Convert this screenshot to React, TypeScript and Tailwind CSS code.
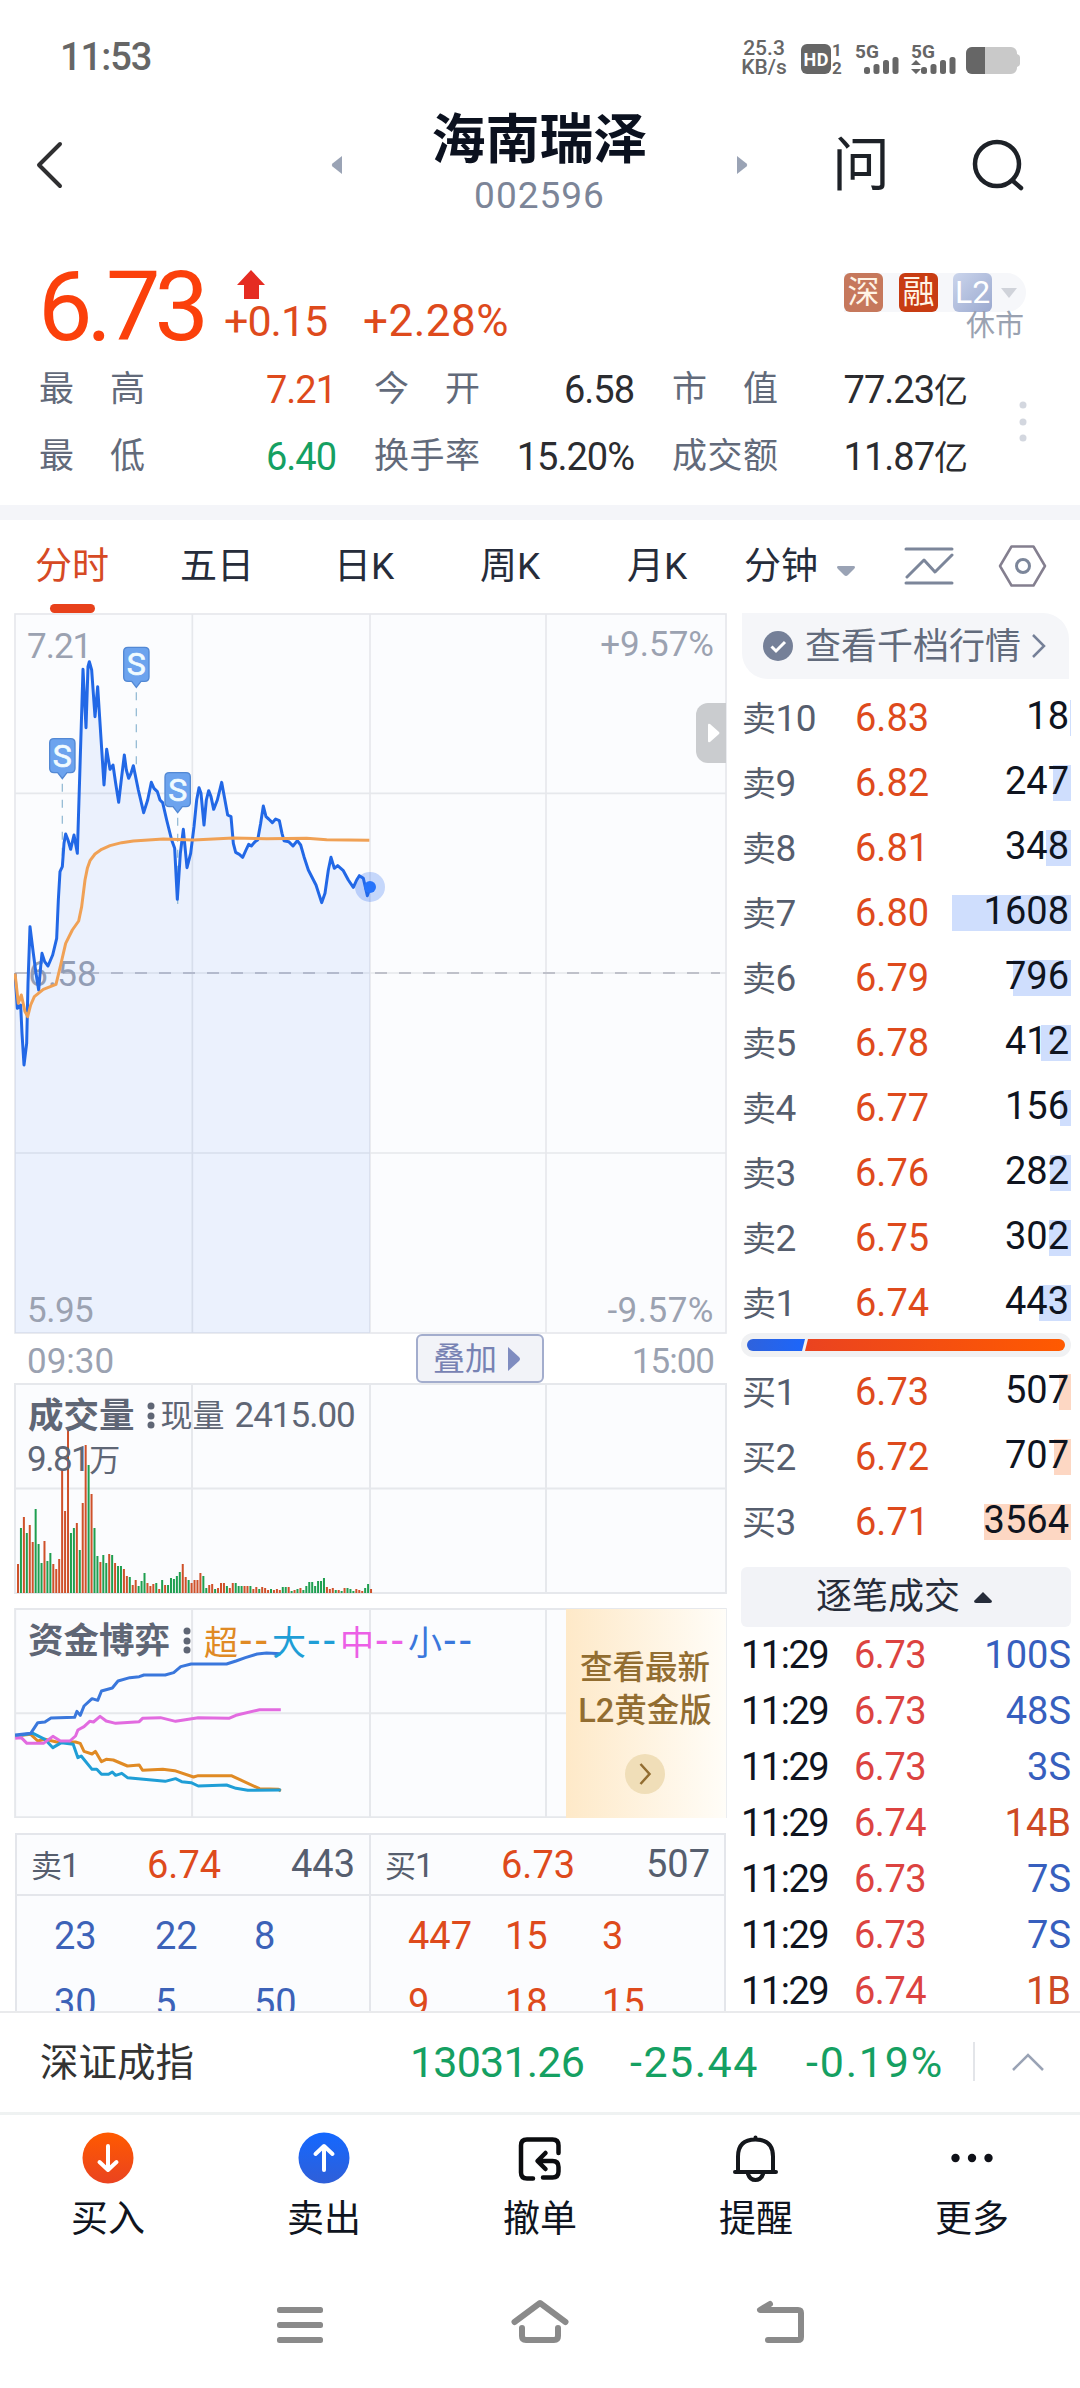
const tabs = [
  { label: '分时', pos: 'ml-[35px] w-[76px]' },
  { label: '五日', pos: 'ml-[69px] w-[76px]' },
  { label: '日K', pos: 'ml-[78px] w-[66px]' },
  { label: '周K', pos: 'ml-[80px] w-[66px]' },
  { label: '月K', pos: 'ml-[81px] w-[66px]' },
];

const stats = [
  { label: '最高', value: '7.21', color: 'text-[#de4a1c]' },
  { label: '今开', value: '6.58', color: 'text-[#2b2c30]' },
  { label: '市值', value: '77.23亿', color: 'text-[#2b2c30]' },
  { label: '最低', value: '6.40', color: 'text-[#15a062]' },
  { label: '换手率', value: '15.20%', color: 'text-[#2b2c30]' },
  { label: '成交额', value: '11.87亿', color: 'text-[#2b2c30]' },
];

const asks = [
  { label: '卖10', price: '6.83', volume: 18, bar: 1 },
  { label: '卖9', price: '6.82', volume: 247, bar: 18 },
  { label: '卖8', price: '6.81', volume: 348, bar: 25 },
  { label: '卖7', price: '6.80', volume: 1608, bar: 119 },
  { label: '卖6', price: '6.79', volume: 796, bar: 58 },
  { label: '卖5', price: '6.78', volume: 412, bar: 30 },
  { label: '卖4', price: '6.77', volume: 156, bar: 11 },
  { label: '卖3', price: '6.76', volume: 282, bar: 21 },
  { label: '卖2', price: '6.75', volume: 302, bar: 22 },
  { label: '卖1', price: '6.74', volume: 443, bar: 32 },
];

const bids = [
  { label: '买1', price: '6.73', volume: 507, bar: 12 },
  { label: '买2', price: '6.72', volume: 707, bar: 17 },
  { label: '买3', price: '6.71', volume: 3564, bar: 87 },
];

const trades = [
  { price: '6.73', volume: '100S' },
  { price: '6.73', volume: '48S' },
  { price: '6.73', volume: '3S' },
  { price: '6.74', volume: '14B' },
  { price: '6.73', volume: '7S' },
  { price: '6.73', volume: '7S' },
  { price: '6.74', volume: '1B' },
];

// height of each minute bar, followed by r (up) or g (down)
const volumeBars =
  '29r 65g 76r 60g 68r 51r 84g 49g 30g 52r 32g 40g 29r 24r 34r 124r 82r 163r 60g 65g 70r 43g 90r 148r 128g 99r 65g 37g 31r 38g 30g 39r 38g 30r 27g 27g 24r 17r 16g 8r 13r 7g 12g 20g 10r 7r 9r 10g 4r 13g 8r 8g 15g 14g 17g 21g 29r 16r 13g 10r 13r 13r 20r 17g 5g 8r 9r 4g 5r 10r 10r 7g 5r 10r 10g 7g 7g 7r 7r 7g 4r 6r 4g 6r 5r 3r 4g 3r 4r 3r 6g 6g 6r 2g 3r 4g 5r 3g 7g 11g 11g 7g 12g 12g 15g 6r 4r 5r 3g 3r 2g 5r 5g 4g 2g 4r 3r 2r 5g 9g 4r'.split(' ');

const pricePoints =
  '45,1120 52,1225 62,1215 66,1300 72,1395 80,1330 84,1150 90,980 100,1060 108,1120 116,1170 122,1100 126,1060 134,1085 144,1098 158,1065 170,1015 175,900 180,815 187,800 192,730 197,702 204,720 212,748 222,705 232,760 240,500 249,208 258,383 264,200 268,185 275,210 285,350 293,260 302,400 312,555 320,448 330,508 339,495 347,550 356,607 365,530 373,465 379,510 386,535 393,520 400,497 415,570 431,638 443,600 454,547 462,565 472,575 480,600 488,608 500,660 515,720 524,745 532,898 541,760 550,688 561,803 572,760 582,680 590,600 597,563 603,580 612,675 619,600 626,572 633,590 641,628 652,600 665,547 673,590 683,645 693,650 700,730 707,757 718,763 728,772 738,750 746,733 754,738 765,725 773,720 782,670 790,618 798,650 806,657 817,668 827,657 838,662 846,700 852,722 866,725 879,738 892,722 902,735 912,770 925,810 948,855 965,908 975,880 985,810 993,772 1003,805 1013,797 1030,812 1045,840 1060,862 1070,840 1078,827 1090,835 1102,887 1110,865';

const averagePoints =
  '45,1120 55,1210 64,1185 75,1235 83,1250 92,1215 103,1190 130,1168 168,1153 182,1095 197,1030 217,990 236,963 245,920 255,840 262,805 270,782 285,762 305,748 330,737 365,728 400,723 490,717 580,720 700,714 800,716 920,715 980,719 1108,721';

const flowLines = [
  {
    color: '#e08a24',
    points: '32,440 65,435 80,455 95,450 120,458 160,458 170,462 178,486 195,494 202,486 215,517 225,510 240,512 270,530 295,527 302,543 345,540 370,544 410,563 420,559 490,559 550,598 590,600 595,605',
  },
  {
    color: '#1f9ed6',
    points: '32,440 70,432 95,450 112,475 130,460 155,465 165,505 172,500 195,540 205,540 215,555 230,555 238,548 245,558 258,552 270,565 350,576 372,568 385,577 405,580 420,590 480,587 500,597 525,603 595,602',
  },
  {
    color: '#e26be0',
    points: '32,447 45,445 57,462 92,462 112,441 128,455 148,455 160,440 165,422 178,412 190,396 198,398 212,381 225,395 245,402 295,397 302,387 340,385 372,396 420,385 485,387 500,378 550,361 595,361',
  },
  {
    color: '#3a77dc',
    points: '32,437 65,432 80,400 95,398 108,386 158,384 163,366 170,378 178,350 195,328 207,333 215,305 238,296 250,275 275,265 295,262 305,257 350,257 368,250 383,232 405,224 480,224 500,215 520,205 545,194 565,191 595,193',
  },
];

const markers = [
  { x: 187, y: 416, end: 800 },
  { x: 409, y: 142, end: 500 },
  { x: 533, y: 518, end: 912 },
];

function StatusBar() {
  return (
    <div className="flex h-[95px] pt-[37px] text-[#666]">
      <div className="ml-[60px] w-[676px] text-[38px] leading-[41px] font-medium tracking-[-1px]">11:53</div>
      <div className="w-[56px] pt-[2px] text-center text-[21px] leading-[19px] font-medium">
        <div>25.3</div>
        <div>KB/s</div>
      </div>
      <svg className="ml-[8px]" width="222" height="42" viewBox="800 37 222 42" fill="#666">
        <rect x="801" y="44" width="30" height="30" rx="6" />
        <text x="803.5" y="66" fontSize="18" fontWeight="700" fill="#fff" textLength="25">HD</text>
        <text x="832" y="56" fontSize="17" fontWeight="700">1</text>
        <text x="832" y="74" fontSize="17" fontWeight="700">2</text>
        <text x="855" y="58" fontSize="19" fontWeight="700">5G</text>
        <text x="911" y="58" fontSize="19" fontWeight="700">5G</text>
        <rect x="864" y="67" width="6" height="7" rx="2.5" />
        <rect x="873.5" y="64" width="6" height="10" rx="2.5" />
        <rect x="883" y="60" width="6" height="14" rx="2.5" />
        <rect x="892.5" y="57" width="6" height="17" rx="2.5" />
        <path d="M911 65l5-5 5 5zM911 69l5 5 5-5z" />
        <rect x="921" y="67" width="6" height="7" rx="2.5" />
        <rect x="930.5" y="64" width="6" height="10" rx="2.5" />
        <rect x="940" y="60" width="6" height="14" rx="2.5" />
        <rect x="949.5" y="57" width="6" height="17" rx="2.5" />
        <path d="M972 47h39a6 6 0 0 1 6 6v1q3 1 3 3v7q0 2-3 3v1a6 6 0 0 1-6 6h-39a6 6 0 0 1-6-6v-15a6 6 0 0 1 6-6z" fill="#c9c9c9" />
        <path d="M972 47h13v27h-13a6 6 0 0 1-6-6v-15a6 6 0 0 1 6-6z" />
      </svg>
    </div>
  );
}

function Header() {
  return (
    <div className="flex h-[140px] items-center">
      <svg className="ml-[35px]" width="30" height="50" viewBox="0 0 30 50" fill="none" stroke="#2f2f31" strokeWidth="4" strokeLinecap="round" strokeLinejoin="round">
        <path d="M25 4L4 25l21 21" />
      </svg>
      <svg className="ml-[266px]" width="12" height="20" viewBox="0 0 12 20" fill="#9aa3b5">
        <path d="M11 1v18L1.500 11.500q-1.500-1.500 0-3z" />
      </svg>
      <div className="flex h-full flex-1 flex-col items-center pt-[16px]">
        <h1 className="text-[54px] leading-[60px] font-bold text-[#0b111f]">海南瑞泽</h1>
        <div className="mt-[3px] text-[37px] leading-[44px] tracking-[1px] text-[#7c8598]">002596</div>
      </div>
      <svg width="12" height="20" viewBox="0 0 12 20" fill="#9aa3b5">
        <path d="M1 1v18l9.500-7.500q1.500-1.500 0-3z" />
      </svg>
      <div className="ml-[83px] w-[60px] text-center text-[58px] leading-[60px] text-[#1d2127]">问</div>
      <svg className="mr-[50px] ml-[79px]" width="60" height="54" viewBox="0 0 60 54" fill="none" stroke="#1d2127" strokeWidth="4.500" strokeLinecap="round">
        <circle cx="27" cy="26" r="22" />
        <path d="M43 43l8 7" />
      </svg>
    </div>
  );
}

function Quote() {
  return (
    <section className="h-[270px] pt-[30px]">
      <div className="flex h-[80px]">
        <div className="ml-[38px] w-[186px] text-[97px] leading-[84px] tracking-[-6px] text-[#fb400b]">6.73</div>
        <div className="w-[139px]">
          <svg className="mt-[5px] ml-[13px]" width="28" height="30" viewBox="0 0 28 30" fill="#e52c22">
            <path d="M14 0L28 15h-6v14H7V15H0z" />
          </svg>
          <div className="text-[43px] leading-[43px] tracking-[-1px] text-[#de4a1c]">+0.15</div>
        </div>
        <div className="w-[481px] pt-[35px] text-[44px] leading-[43px] tracking-[0.500px] text-[#de4a1c]">+2.28%</div>
        <div className="w-[182px] pt-[8px]">
          <div className="flex h-[39px] items-center rounded-r-full bg-[#f6f7fa] text-[32px] leading-[38px] text-[#fff4e6]">
            <span className="h-[39px] w-[39px] rounded-[6px] bg-[#c6785c] text-center">深</span>
            <span className="ml-[16px] h-[39px] w-[39px] rounded-[6px] bg-[#c83c12] text-center">融</span>
            <span className="ml-[15px] h-[39px] w-[39px] rounded-[6px] bg-linear-to-br from-[#cbd5ec] to-[#9ba9cf] text-center text-white">L2</span>
            <svg className="ml-[9px]" width="16" height="10" viewBox="0 0 16 10" fill="#d0d3da">
              <path d="M0 0h16L8 10z" />
            </svg>
          </div>
          <div className="pr-[2px] text-right text-[29px] leading-[29px] text-[#9aa2b1]">休市</div>
        </div>
      </div>
      <div className="mt-[12px] flex">
        <div className="ml-[39px] grid w-[928px] grid-cols-[297px_260px_295px] gap-x-[38px] text-[38px] leading-[66px]">
          {stats.map((stat) => (
            <div key={stat.label} className="flex">
              <span className="flex w-[106px] justify-between text-[35px] text-[#626a7a]">
                {stat.label.split('').map((char) => (
                  <span key={char}>{char}</span>
                ))}
              </span>
              <span className={`flex-1 text-right tracking-[-1px] ${stat.color}`}>
                {stat.value.replace('亿', '')}
                {stat.value.includes('亿') && <span className="text-[34px]">亿</span>}
              </span>
            </div>
          ))}
        </div>
        <svg className="mt-[43px] ml-[52px]" width="8" height="44" viewBox="0 0 8 44" fill="#d3d7df">
          <circle cx="4" cy="5" r="3.500" />
          <circle cx="4" cy="22" r="3.500" />
          <circle cx="4" cy="38" r="3.500" />
        </svg>
      </div>
    </section>
  );
}

function PeriodTabs() {
  return (
    <nav className="flex h-[93px] text-[37px] leading-[94px] text-[#262c3a]">
      {tabs.map((tab, i) => (
        <div key={tab.label} className={`relative shrink-0 ${tab.pos} ${i === 0 ? 'text-[#d64a24]' : ''}`}>
          {tab.label}
          {i === 0 && <div className="absolute bottom-0 left-[15px] h-[9px] w-[45px] rounded-full bg-[#e8411b]" />}
        </div>
      ))}
      <div className="ml-[51px] w-[77px]">分钟</div>
      <svg className="mt-[45px] ml-[15px]" width="20" height="12" viewBox="0 0 20 12" fill="#9aa3b5">
        <path d="M2 1h16q2 1 0 3l-6 6q-2 2-4 0L2 4q-2-2 0-3z" />
      </svg>
      <svg className="mt-[25px] ml-[48px]" width="50" height="42" viewBox="0 0 50 42" fill="none" stroke="#7c869a" strokeWidth="3" strokeLinecap="round" strokeLinejoin="round">
        <path d="M2 4h46M2 38h46M3 32l17-17 11 12 17-17" />
      </svg>
      <svg className="mt-[24px] ml-[44px]" width="50" height="44" viewBox="0 0 50 44" fill="none" stroke="#847f8f" strokeWidth="2.500" strokeLinejoin="round">
        <path d="M13.500 2.500h22L47 22 35.500 41.500h-22L2 22z" />
        <circle cx="25" cy="22" r="6.500" stroke="#7c869a" strokeWidth="3" />
      </svg>
    </nav>
  );
}

function PriceChart() {
  return (
    <div className="relative h-[721px] text-[35px] leading-[36px] text-[#9ba2b1]">
      <svg className="block" width="713" height="721" viewBox="42 39 2139 2163">
        <rect x="45" y="42" width="2133" height="2157" fill="#fbfcfe" stroke="#e6e8ec" strokeWidth="5" />
        <path d="M577 42V2199M1110 42V2199M1638 42V2199M45 580H2178M45 1119H2178M45 1659H2178" stroke="#e6e8ec" strokeWidth="5" />
        <path d="M45 1119H2160" stroke="#bfc1ca" strokeWidth="6" strokeDasharray="36 36" />
        <text x="85" y="1158" fontSize="105" fill="#9ba2b1">6.58</text>
        <polygon points={`${pricePoints} 1110,2199 45,2199`} fill="#2468f2" fillOpacity="0.075" />
        {markers.map((m) => (
          <path key={m.x} d={`M${m.x} ${m.y + 135}V${m.end}`} stroke="#98bdd6" strokeWidth="4" strokeDasharray="24 24" />
        ))}
        <polyline points={pricePoints} fill="none" stroke="#2268e6" strokeWidth="9" strokeLinejoin="round" />
        <polyline points={averagePoints} fill="none" stroke="#f0a155" strokeWidth="9" strokeLinejoin="round" />
        <circle cx="1110" cy="861" r="45" fill="#2468f2" fillOpacity="0.25" />
        <circle cx="1110" cy="861" r="18" fill="#2673fb" />
        {markers.map((m) => (
          <g key={m.x}>
            <path
              d={`M${m.x - 25} ${m.y}h50q13 0 13 13v76q0 13 -13 13h-11l-14 18l-14 -18h-11q-13 0 -13 -13v-76q0 -13 13 -13z`}
              fill="#6ca3ee"
              stroke="#5288d4"
              strokeWidth="4"
            />
            <text x={m.x} y={m.y + 84} fontSize="96" fill="#f1fbff" stroke="#f1fbff" strokeWidth="2" textAnchor="middle">S</text>
          </g>
        ))}
      </svg>
      <span className="absolute top-[16px] left-[13px] tracking-[-1px]">7.21</span>
      <span className="absolute top-[14px] right-[13px]">+9.57%</span>
      <span className="absolute bottom-[5px] left-[13px] tracking-[-0.500px]">5.95</span>
      <span className="absolute right-[13px] bottom-[5px] tracking-[0.500px]">-9.57%</span>
      <div className="absolute top-[90px] right-px flex h-[60px] w-[30px] items-center rounded-l-[12px] bg-[#cacccf] pl-[12px]">
        <svg width="12" height="20" viewBox="0 0 12 20" fill="#fff">
          <path d="M0 2q0-2 2-1l9 8q1 1 0 2l-9 8q-2 1-2-1z" />
        </svg>
      </div>
    </div>
  );
}

function VolumeChart() {
  return (
    <div className="relative h-[211px] text-[#5f6675]">
      <svg className="block" width="713" height="211" viewBox="14 1383.500 713 211">
        <rect x="15" y="1384.500" width="711" height="209" fill="#fbfcfe" stroke="#e6e8ec" strokeWidth="2" />
        <path d="M192 1384V1594M370 1384V1594M546 1384V1594M15 1489H726" stroke="#e6e8ec" strokeWidth="2" />
        {volumeBars.map((bar, i) => {
          const height = parseInt(bar);
          return (
            <rect key={i} x={17 + i * 2.942} y={1593.5 - height} width="2" height={height} fill={bar.endsWith('r') ? '#cf512a' : '#1f9f50'} />
          );
        })}
      </svg>
      <div className="absolute top-[14px] left-[14px] flex h-[38px] items-center text-[33px] leading-[38px] whitespace-pre">
        <span className="text-[35.500px] font-bold">成交量</span>
        <svg className="mr-[6px] ml-[12px]" width="8" height="28" viewBox="0 0 8 28" fill="#5f6675">
          <circle cx="4" cy="4" r="3.500" />
          <circle cx="4" cy="14" r="3.500" />
          <circle cx="4" cy="23" r="3.500" />
        </svg>
        <span className="text-[32px]">现量</span>
        <span className="ml-[10px] text-[35px] tracking-[-1px]">2415.00</span>
      </div>
      <div className="absolute top-[58px] left-[13px] text-[35px] leading-[38px] tracking-[-1.500px]">
        9.81<span className="text-[31px]">万</span>
      </div>
    </div>
  );
}

function FlowChart() {
  return (
    <div className="relative mt-[14px] h-[210px]">
      <svg className="block" width="713" height="210" viewBox="29.600 56 1511 630" preserveAspectRatio="none">
        <rect x="32" y="59" width="1506" height="625" fill="#fbfcfe" stroke="#e6e8ec" strokeWidth="2" vectorEffect="non-scaling-stroke" />
        <path d="M407 58V686M784 58V686M1157 58V686M32 372H1538" stroke="#e6e8ec" strokeWidth="2" vectorEffect="non-scaling-stroke" />
        {flowLines.map((line) => (
          <polyline key={line.color} points={line.points} fill="none" stroke={line.color} strokeWidth="3" strokeLinejoin="round" vectorEffect="non-scaling-stroke" />
        ))}
      </svg>
      <div className="absolute top-[13px] left-[14px] flex h-[40px] items-center text-[34px] leading-[40px] whitespace-nowrap">
        <span className="text-[35.500px] font-bold text-[#5f6675]">资金博弈</span>
        <svg className="mr-[13px] ml-[13px]" width="8" height="28" viewBox="0 0 8 28" fill="#5f6675">
          <circle cx="4" cy="4" r="3.500" />
          <circle cx="4" cy="14" r="3.500" />
          <circle cx="4" cy="23" r="3.500" />
        </svg>
        <span className="w-[68px] text-[#e08a24]">超<span className="ml-[2px] text-[42px] leading-none tracking-[4px]">--</span></span>
        <span className="w-[68px] text-[#1f9ed6]">大<span className="ml-[2px] text-[42px] leading-none tracking-[4px]">--</span></span>
        <span className="w-[68px] text-[#ec5fe6]">中<span className="ml-[2px] text-[42px] leading-none tracking-[4px]">--</span></span>
        <span className="w-[68px] text-[#3a77dc]">小<span className="ml-[2px] text-[42px] leading-none tracking-[4px]">--</span></span>
      </div>
      <div className="absolute top-px right-px flex h-[209px] w-[160px] flex-col items-center bg-linear-to-r from-[#fee9c8] to-[#fffdf8] pt-[38px] pr-[2px] text-[32.500px] leading-[43px] font-medium text-[#926d31]">
        <div>查看最新</div>
        <div>L2黄金版</div>
        <svg className="mt-[21px]" width="40" height="40" viewBox="0 0 40 40" fill="none">
          <circle cx="20" cy="20" r="20" fill="#f0deb8" />
          <path d="M15.500 10l9 10-9 10" stroke="#926d31" strokeWidth="2.500" />
        </svg>
      </div>
    </div>
  );
}

type QueueHalfProps = { label: string; price: string; volume: string; rows: string[][]; color: string; cols: string };

function QueueHalf({ label, price, volume, rows, color, cols }: QueueHalfProps) {
  return (
    <div>
      <div className="flex h-[61px] border-b-2 border-[#e4e6eb] text-[38px] leading-[58px] text-[#565e6e]">
        <span className="w-[130px] pl-[14px]">
          <span className="text-[31px]">{label[0]}</span>
          <span className="-ml-px text-[34px]">{label[1]}</span>
        </span>
        <span className="w-[90px] pt-px text-[#de4a1c]">{price}</span>
        <span className="flex-1 pr-[14px] text-right">{volume}</span>
      </div>
      {rows.map((row) => (
        <div key={row.join()} className={`grid h-[67px] pt-[7px] pl-[37px] text-[38px] leading-[67px] ${cols} ${color}`}>
          {row.map((n) => (
            <span key={n}>{n}</span>
          ))}
        </div>
      ))}
    </div>
  );
}

function OrderRow({ label, price, volume, bar, side }: { label: string; price: string; volume: number; bar: number; side: 'ask' | 'bid' }) {
  return (
    <div className="relative flex h-[65px] text-[38px] leading-[37px]">
      <div className={`absolute top-0 right-0 h-[36px] ${side === 'ask' ? 'bg-[#cfdefd]' : 'bg-[#fdd7c3]'}`} style={{ width: bar }} />
      <span className="w-[113px] text-[37px] tracking-[-0.500px] text-[#565e6e]"><span className="text-[34px]">{label[0]}</span>{label.slice(1)}</span>
      <span className="text-[#de4a1c]">{price}</span>
      <span className="relative flex-1 pr-[2px] text-right leading-[32px] text-[#0f1420]">{volume}</span>
    </div>
  );
}

function OrderBook() {
  return (
    <div className="ml-[14px] w-[330px]">
      <div className="ml-px flex h-[66px] w-[327px] items-center rounded-tr-[26px] rounded-bl-[26px] bg-[#f5f6f9] pl-[21px] text-[#626b7c]">
        <svg width="30" height="30" viewBox="0 0 30 30" fill="none">
          <circle cx="15" cy="15" r="15" fill="#758098" />
          <path d="M8.500 15.500l4.500 4.500 9-9" stroke="#fff" strokeWidth="3" />
        </svg>
        <span className="ml-[12px] pt-[2px] text-[36px]">查看千档行情</span>
        <svg className="ml-[10px]" width="16" height="26" viewBox="0 0 16 26" fill="none" stroke="#758098" strokeWidth="2.500">
          <path d="M2 2l11 11L2 24" />
        </svg>
      </div>
      <div className="mt-[21px] pl-px">
        {asks.map((row) => (
          <OrderRow key={row.label} {...row} side="ask" />
        ))}
      </div>
      <div className="-mt-[17px] flex h-[24px] items-center rounded-full bg-[#f0f1f3] px-[6px]">
        <svg width="318" height="12" viewBox="0 0 318 12">
          <defs>
            <linearGradient id="sell">
              <stop offset="0" stopColor="#2f62dc" />
              <stop offset="1" stopColor="#1c66fb" />
            </linearGradient>
            <linearGradient id="buy">
              <stop offset="0" stopColor="#ea4320" />
              <stop offset="1" stopColor="#ff5a00" />
            </linearGradient>
          </defs>
          <path d="M6 0h52l-3 12H6A6 6 0 0 1 6 0z" fill="url(#sell)" />
          <path d="M61 0h251a6 6 0 0 1 0 12H58z" fill="url(#buy)" />
        </svg>
      </div>
      <div className="mt-[17px] pl-px">
        {bids.map((row) => (
          <OrderRow key={row.label} {...row} side="bid" />
        ))}
      </div>
      <div className="-mt-[2px] flex h-[60px] items-center justify-center rounded-[6px] bg-[#f2f3f7] pr-[4px] text-[36px] leading-[60px] text-[#262c3a]">
        逐笔成交
        <svg className="ml-[14px]" width="18" height="11" viewBox="0 0 18 11" fill="#262c3a">
          <path d="M9 0l9 9q0 2-2 2H2q-2 0-2-2z" />
        </svg>
      </div>
      {trades.map((trade, i) => (
        <div key={i} className="flex h-[56px] text-[38px] leading-[56px]">
          <span className="w-[113px] tracking-[-1.500px] text-[#0f1420]">11:29</span>
          <span className="tracking-[-0.500px] text-[#dc4340]">{trade.price}</span>
          <span className={`flex-1 text-right ${trade.volume.endsWith('S') ? 'text-[#375fbe]' : 'text-[#cd4a25]'}`}>{trade.volume}</span>
        </div>
      ))}
    </div>
  );
}

function IndexBar() {
  return (
    <div className="flex h-[104px] border-t-2 border-b-3 border-t-[#e9eaec] border-b-[#eff2f2] text-[43px] leading-[99px] text-[#15a062]">
      <span className="ml-[40px] w-[370px] text-[38.500px] text-[#333]">深证成指</span>
      <span className="w-[220px] tracking-[-0.800px]">13031.26</span>
      <span className="w-[176px] tracking-[1.500px]">-25.44</span>
      <span className="w-[167px] tracking-[1.800px]">-0.19%</span>
      <div className="mt-[29px] h-[39px] w-[2px] bg-[#e3e5e9]" />
      <svg className="mt-[39px] ml-[36px]" width="34" height="20" viewBox="0 0 34 20" fill="none" stroke="#9aa3b5" strokeWidth="2.500">
        <path d="M2 18L17 3l15 15" />
      </svg>
    </div>
  );
}

const actions = [
  {
    label: '买入',
    icon: (
      <>
        <circle cx="26" cy="26" r="25.500" fill="url(#down)" />
        <path d="M26 14v23M17.500 30l8.500 8 8.500-8" stroke="#fff" strokeWidth="4" />
      </>
    ),
  },
  {
    label: '卖出',
    icon: (
      <>
        <circle cx="26" cy="26" r="25.500" fill="url(#up)" />
        <path d="M26 38V15M17.500 22l8.500-8 8.500 8" stroke="#fff" strokeWidth="4" />
      </>
    ),
  },
  {
    label: '撤单',
    icon: (
      <>
        <path d="M19 46.500h-6q-6 0-6-6v-27q0-6 6-6h25.500q6 0 6 6V21" stroke="#0b0c0f" strokeWidth="4.500" />
        <path d="M29 45.500h9.500q6 0 6-6V35q0-6-6-6H25M31.500 21l-8 8 8 8" stroke="#0b0c0f" strokeWidth="4.500" />
      </>
    ),
  },
  {
    label: '提醒',
    icon: (
      <path d="M8 39V24.500q0-17 17.500-17T43 24.500V39M5 40h41M18 42q2 6 7.500 6t7.500-6M25.500 5.500v1" stroke="#14171c" strokeWidth="4" />
    ),
  },
  {
    label: '更多',
    icon: (
      <g fill="#0f1118">
        <circle cx="9.500" cy="26" r="4.200" />
        <circle cx="26" cy="26" r="4.200" />
        <circle cx="42.500" cy="26" r="4.200" />
      </g>
    ),
  },
];

function ActionBar() {
  return (
    <div className="grid h-[139px] grid-cols-5 pt-[17px]">
      {actions.map((action) => (
        <div key={action.label} className="flex flex-col items-center text-[37px] leading-[71px] text-[#0f1420]">
          <svg className="shrink-0" width="52" height="52" viewBox="0 0 52 52" fill="none" strokeLinecap="round" strokeLinejoin="round">
            <defs>
              <linearGradient id="down" x1="0" y1="0" x2="0" y2="1">
                <stop offset="0" stopColor="#ff5a00" />
                <stop offset="1" stopColor="#ea4320" />
              </linearGradient>
              <linearGradient id="up" x1="0" y1="0" x2="0" y2="1">
                <stop offset="0" stopColor="#1468ff" />
                <stop offset="1" stopColor="#2f5fd8" />
              </linearGradient>
            </defs>
            {action.icon}
          </svg>
          {action.label}
        </div>
      ))}
    </div>
  );
}

function SystemNav() {
  return (
    <div className="flex pt-[39px]">
      <svg className="ml-[270px]" width="60" height="54" viewBox="0 0 60 54" fill="#8a8a8a">
        <rect x="7" y="14" width="46" height="6" rx="2.500" />
        <rect x="7" y="29" width="46" height="6" rx="2.500" />
        <rect x="7" y="44" width="46" height="6" rx="2.500" />
      </svg>
      <svg className="ml-[180px]" width="60" height="54" viewBox="0 0 60 54" fill="none" stroke="#8a8a8a" strokeWidth="6" strokeLinecap="round">
        <path d="M4.500 29L30 10l25.500 19" strokeLinejoin="round" />
        <path d="M12 35v8q0 4 4 4h28q4 0 4-4v-8" />
      </svg>
      <svg className="ml-[180px]" width="60" height="54" viewBox="0 0 60 54" fill="none" stroke="#8a8a8a" strokeWidth="6" strokeLinecap="round" strokeLinejoin="round">
        <path d="M20 11l-10 6h38q3 0 3 3v24q0 3-3 3H18" />
      </svg>
    </div>
  );
}

export default function App() {
  return (
    <div className="h-[2388px] w-[1080px] overflow-hidden bg-white font-['Roboto','Noto_Sans_CJK_SC',sans-serif]">
      <StatusBar />
      <Header />
      <Quote />
      <div className="h-[15px] bg-[#f4f5f9]" />
      <PeriodTabs />
      <main className="flex h-[1398px] overflow-hidden">
        <div className="ml-[14px] w-[713px]">
          <PriceChart />
          <div className="flex h-[49px] pr-[13px] pl-[13px] text-[35px] leading-[56px] text-[#9ba2b1]">
            <span className="w-[389px]">09:30</span>
            <div className="flex h-[49px] w-[128px] items-center rounded-[6px] border-2 border-[#a3adcd] bg-[#f2f3f8] pl-[15px] text-[32px] leading-[44px] text-[#7782b3]">
              叠加
              <svg className="ml-[11px]" width="13" height="24" viewBox="0 0 13 24" fill="#7f8cc0">
                <path d="M0 0l11 10q2 2 0 4L0 24z" />
              </svg>
            </div>
            <span className="flex-1 text-right tracking-[-1px]">15:00</span>
          </div>
          <VolumeChart />
          <FlowChart />
          <div className="mt-[15px] ml-px grid h-[200px] w-[711px] grid-cols-[352px_1fr] border-2 border-[#e4e6eb] bg-[#fbfcfe]">
            <QueueHalf label="卖1" price="6.74" volume="443" rows={[['23', '22', '8'], ['30', '5', '50']]} color="text-[#3c62b8]" cols="grid-cols-[101px_99px_1fr]" />
            <div className="border-l-2 border-[#e4e6eb]">
              <QueueHalf label="买1" price="6.73" volume="507" rows={[['447', '15', '3'], ['9', '18', '15']]} color="text-[#de4a1c]" cols="grid-cols-[97px_97px_1fr]" />
            </div>
          </div>
        </div>
        <OrderBook />
      </main>
      <IndexBar />
      <ActionBar />
      <SystemNav />
    </div>
  );
}
